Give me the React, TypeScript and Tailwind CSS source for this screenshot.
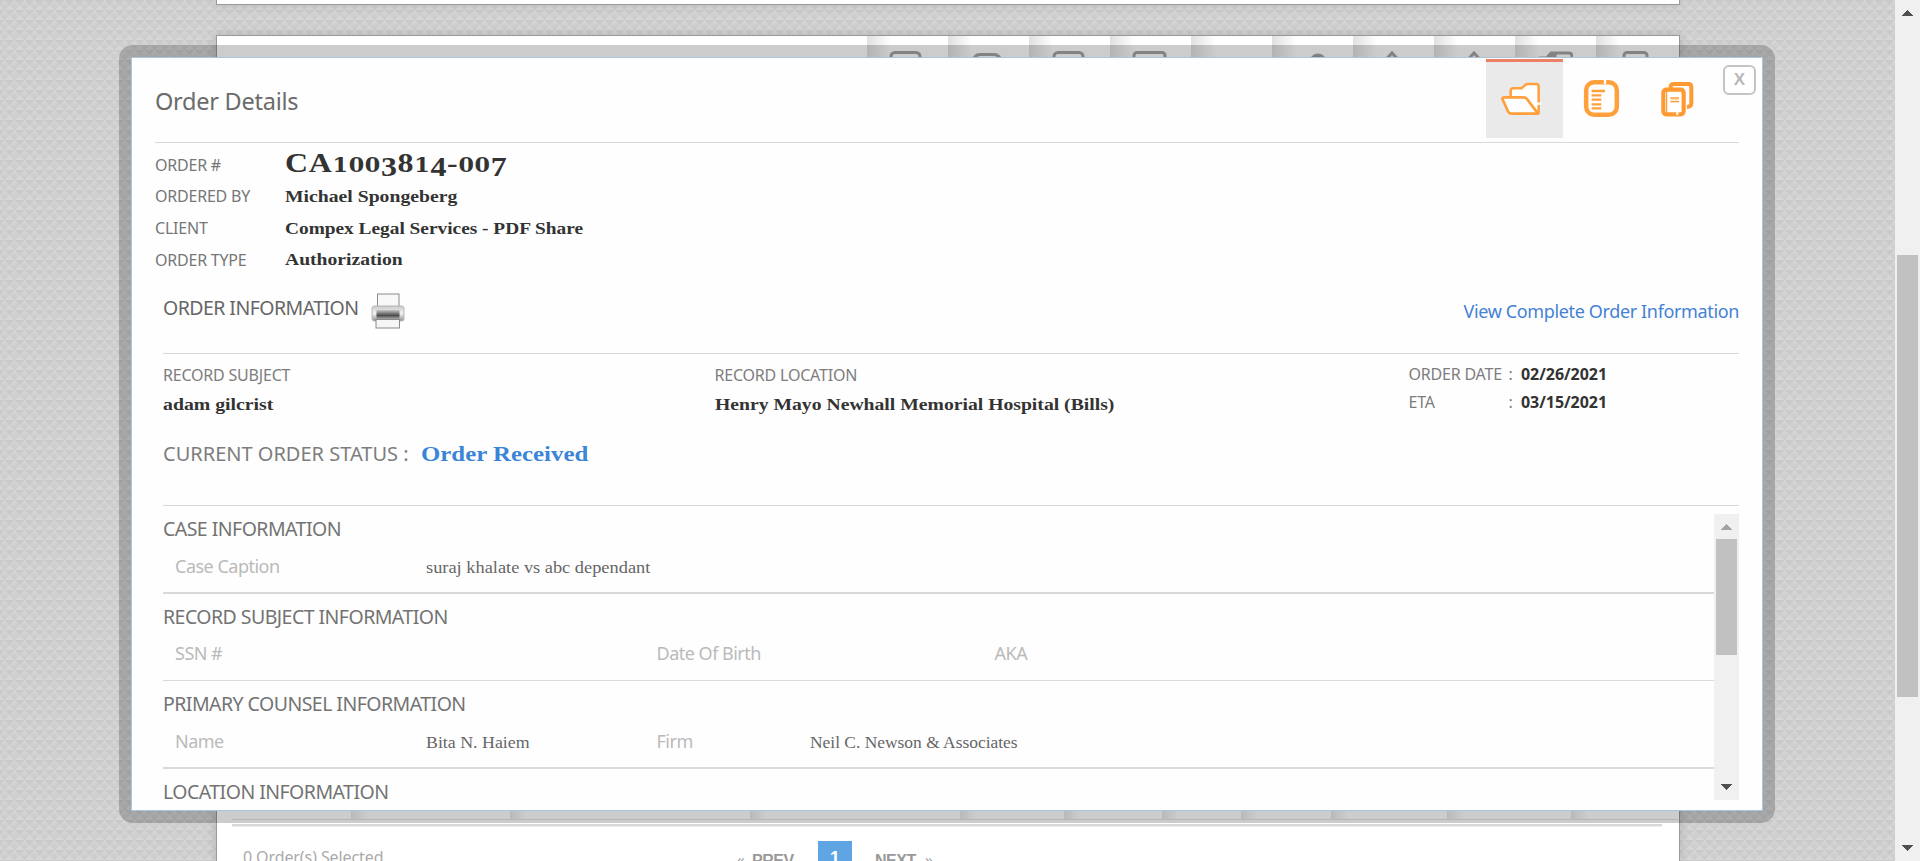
import React from 'react';

const SANS = "font-['Noto_Sans','Open_Sans',sans-serif]";
const SERIF = "font-['Georgia','Liberation_Serif',serif]";
const serifBold = `${SERIF} inline-block origin-left whitespace-nowrap text-[17.5px] font-bold text-[#333]`;

function Arrow({ up, className }: { up?: boolean; className: string }) {
  return (
    <svg viewBox="0 0 11 6" shapeRendering="crispEdges" className={`h-[6px] w-[11px] ${className}`}>
      <path d={up ? 'M0 6L5.5 0L11 6Z' : 'M0 0L5.5 6L11 0Z'} fill="currentColor" />
    </svg>
  );
}

function FolderIcon() {
  return (
    <svg viewBox="300 236 125 120" className="h-[40px] w-[41.67px]" fill="#fff" stroke="#ffa03c" strokeLinejoin="round">
      <path d="M332 290V272Q332 264 340 264H364L378 252Q380 251 383 251H409Q416 251 416 258V338H340Z" strokeWidth="7.5" />
      <path d="M314 291H368Q376 291 380 295L414 340H336Q328 340 325 335L308 298Q305 291 314 291Z" strokeWidth="8" />
      <path d="M408 310H424" stroke="#fff" strokeWidth="7" />
    </svg>
  );
}

function ListIcon() {
  return (
    <svg viewBox="545 234 118 124" className="h-[41.33px] w-[39.33px]" fill="none" stroke="#ffa03c">
      <rect x="557.5" y="246.5" width="92" height="98" rx="24" strokeWidth="13.5" />
      <path d="M614 238V252" stroke="#fff" strokeWidth="7" />
      <path d="M574 273H614M574 286H603M574 299H603M574 313H603M574 325H603" strokeWidth="7" />
    </svg>
  );
}

function CopyIcon() {
  return (
    <svg viewBox="778 238 110 116" className="h-[38.67px] w-[36.67px]" fill="none" stroke="#ff9a33">
      <path d="M813 264V258Q813 250 823 250H866Q875 250 875 259V308Q875 318 862 319" strokeWidth="12" />
      <rect x="791" y="267" width="61" height="74" rx="9" strokeWidth="12.5" fill="#fff" />
      <path d="M801 270V338" strokeWidth="3.5" />
      <path d="M812 292H838M812 303H838" strokeWidth="4" />
      <path d="M812 297.500H838" stroke="#ffd9ad" strokeWidth="4" />
      <path d="M833 332V343" stroke="#fff" strokeWidth="6" />
    </svg>
  );
}

function PrinterIcon() {
  return (
    <svg viewBox="0 0 34 36" className="h-[36px] w-[34px]">
      <defs>
        <linearGradient id="body" x1="0" y1="0" x2="0" y2="1">
          <stop offset="0" stopColor="#c4c4c4" />
          <stop offset="0.3" stopColor="#8a8a8a" />
          <stop offset="0.6" stopColor="#4c4c4c" />
          <stop offset="1" stopColor="#a8a8a8" />
        </linearGradient>
        <linearGradient id="shell" x1="0" y1="0" x2="0" y2="1">
          <stop offset="0" stopColor="#c9c9c9" />
          <stop offset="0.5" stopColor="#f2f2f2" />
          <stop offset="1" stopColor="#8f8f8f" />
        </linearGradient>
      </defs>
      <rect x="6.500" y="1" width="21.500" height="16" fill="#f8f8f8" stroke="#8a8a8a" />
      <rect x="1" y="13" width="32" height="15" rx="2.500" fill="url(#shell)" stroke="#b5b5b5" />
      <rect x="5.500" y="17" width="23" height="9" fill="url(#body)" />
      <rect x="5" y="26.500" width="23.500" height="8.500" fill="#f6f6f6" stroke="#8a8a8a" />
    </svg>
  );
}

const toolIcons: (React.ReactNode | null)[] = [
  <rect x="4" y="2.500" width="29" height="28" rx="4" />,
  <rect x="5" y="4.500" width="28" height="28" rx="7" />,
  <rect x="5" y="2.500" width="29" height="28" rx="4" />,
  <rect x="4" y="2.500" width="31" height="28" rx="3" />,
  null,
  <circle cx="26" cy="12" r="7" fill="#8a8a8a" />,
  <path d="M9 14L19 3L29 14" />,
  <path d="M10 14L20 3L30 14" />,
  <path d="M4 8H12L16 3H34Q37 3 37 6V20M12 6H20V12" />,
  <rect x="7" y="2.500" width="23" height="28" rx="3" />,
];

function Toolbar() {
  return (
    <div className="flex h-[76px] justify-end">
      {toolIcons.map((icon, i) => (
        <div
          key={i}
          className={`flex justify-center bg-gradient-to-r from-[#e0e0e0] to-white to-[24px] pr-[4px] ${i === 9 ? 'w-[83px]' : 'w-[81px]'}`}
        >
          <svg viewBox="0 0 38 26" className="mt-[14px] h-[26px] w-[38px]" fill="none" stroke="#a3a3a3" strokeWidth="3">
            {icon}
          </svg>
        </div>
      ))}
    </div>
  );
}

const columnWidths = [
  'w-[159px]', 'w-[240px]', 'w-[210px]', 'w-[105px]', 'w-[98px]',
  'w-[79px]', 'w-[90px]', 'w-[116px]', 'w-[124px]', 'w-[107px]',
];

function Background() {
  return (
    <div className="flex h-[861px] flex-col items-start pl-[216px]">
      <div className="h-[5px] w-[1464px] shrink-0 border border-t-0 border-[#999] bg-white shadow-[0_0_10px_rgba(0,0,0,0.15)]" />
      <div className="mt-[30px] flex w-[1464px] flex-1 flex-col border border-b-0 border-[#999] bg-white shadow-[0_0_10px_rgba(0,0,0,0.15)]">
        <Toolbar />
        <div className="flex-1" />
        <div className="mr-px ml-[15px] flex h-[21px] border-b border-[#e4e4e4]">
          <div className="w-[119px]" />
          {columnWidths.map((c, i) => (
            <div key={i} className={`bg-gradient-to-r from-[#e8e8e8] to-white to-[16px] ${c}`} />
          ))}
        </div>
        <div className="mt-[4px] mr-[17px] ml-[15px] h-[3px] border-b border-[#eee] bg-[#d8d8d8]" />
        <div className="flex h-[34px] items-start overflow-hidden">
          <div className={`${SANS} w-[520px] pt-[19px] pl-[26px] text-[16px] leading-[22px] tracking-[-0.1px] text-[#aaa]`}>
            0 Order(s) Selected
          </div>
          <div className="flex items-start font-['Liberation_Sans',sans-serif] text-[16px] leading-[20px] font-bold text-[#999]">
            <span className="w-[15px] pt-[23px] text-[14px] font-normal">«</span>
            <span className="w-[66px] pt-[24px] tracking-[-0.5px]">PREV</span>
            <span className="mt-[14px] h-[34px] w-[34px] bg-[#5fa5e3] pt-[7px] text-center text-[18px] text-white">1</span>
            <span className="ml-[23px] w-[50px] pt-[24px] tracking-[-0.5px]">NEXT</span>
            <span className="pt-[23px] text-[14px] font-normal">»</span>
          </div>
        </div>
      </div>
    </div>
  );
}

function OrderNumber() {
  const low = "font-['DejaVu_Serif',serif] text-[19.5px]";
  return (
    <span className={`${SERIF} inline-block origin-left scale-x-[1.14] text-[28px] leading-[32px] font-bold tracking-[0.6px] whitespace-nowrap text-[#333]`}>
      CA<span className={low}>100</span>
      <span className="align-[-4px]">3</span>8<span className={low}>1</span>
      <span className="align-[-4px]">4</span>-<span className={low}>00</span>
      <span className="align-[-4px]">7</span>
    </span>
  );
}

function HeaderRow({ label, children }: { label: string; children: React.ReactNode }) {
  return (
    <div className="flex h-[31.6px] items-center">
      <span className={`${SANS} w-[129.5px] text-[16px] leading-[24px] tracking-[-0.22px] text-[#777]`}>{label}</span>
      {children}
    </div>
  );
}

function Label({ children }: { children: React.ReactNode }) {
  return <div className={`${SANS} text-[16px] leading-[28px] tracking-[-0.2px] text-[#7d7d7d]`}>{children}</div>;
}

function Section({ title, last, thick, children }: { title: string; last?: boolean; thick?: boolean; children?: React.ReactNode }) {
  return (
    <div className={`h-[87.5px] shrink-0 ${last ? '' : thick ? 'border-b-2 border-[#d9d9d9]' : 'border-b border-[#d9d9d9]'}`}>
      <div className={`${SANS} pt-[8px] text-[19.5px] leading-[30px] tracking-[-0.54px] text-[#737373]`}>{title}</div>
      <div className={`${SANS} mt-[7.5px] flex items-center pl-[12px] text-[18px] leading-[28px] tracking-[-0.5px] text-[#bababa]`}>{children}</div>
    </div>
  );
}

const serifValue = `${SERIF} inline-block origin-left whitespace-nowrap pt-[3px] leading-[25px] text-[17px] tracking-normal text-[#666]`;

function Modal() {
  return (
    <div className="absolute top-[45px] left-[119px] h-[778px] w-[1656px] rounded-[14px] bg-black/20 p-[12px]">
      <div className="flex h-[754px] flex-col border border-[#a9c6dc] bg-[#fefefe]">
        <div className="ml-[23px] flex h-[85px] w-[1584px] shrink-0 border-b border-[#d9d9d9]">
          <div className={`${SANS} flex-1 pt-[27px] text-[23.5px] leading-[32px] tracking-[-0.25px] text-[#6b6b6b]`}>Order Details</div>
          <div className="mt-px flex h-[79px] w-[77px] border-t-[3px] border-[#ef8068] bg-[#eaeaea] pt-[16.500px] pl-[14px]"><FolderIcon /></div>
          <div className="flex w-[77px] justify-center pt-[20px] pl-[1px]"><ListIcon /></div>
          <div className="flex w-[99px] pt-[21.500px] pl-[19px]"><CopyIcon /></div>
        </div>
        <button className="absolute top-[20px] left-[1604px] h-[30px] w-[33px] rounded-[6px] border-2 border-[#c4c4c4] bg-white font-['Liberation_Sans',sans-serif] text-[17px] leading-[26px] font-bold text-[#b8b8b8]">
          X
        </button>
        <div className="ml-[23px] pt-[6px]">
          <HeaderRow label="ORDER #"><OrderNumber /></HeaderRow>
          <HeaderRow label="ORDERED BY"><span className={`${serifBold} scale-x-[1.125]`}>Michael Spongeberg</span></HeaderRow>
          <HeaderRow label="CLIENT"><span className={`${serifBold} scale-x-[1.105]`}>Compex Legal Services - PDF Share</span></HeaderRow>
          <HeaderRow label="ORDER TYPE"><span className={`${serifBold} scale-x-[1.12]`}>Authorization</span></HeaderRow>
        </div>
        <div className="ml-[31px] flex h-[79px] w-[1576px] shrink-0 items-start border-b border-[#d9d9d9] pt-[17.500px]">
          <span className={`${SANS} w-[207.5px] text-[19.5px] leading-[30px] tracking-[-0.55px] text-[#666]`}>ORDER INFORMATION</span>
          <PrinterIcon />
          <span className={`${SANS} ml-auto pt-[3.5px] text-[18px] leading-[30px] tracking-[-0.36px] text-[#4482d4]`}>View Complete Order Information</span>
        </div>
        <div className="ml-[31px] flex w-[1576px] shrink-0 pt-[7px]">
          <div className="w-[551.500px]">
            <Label>RECORD SUBJECT</Label>
            <span className={`${serifBold} scale-x-[1.13] leading-[30px]`}>adam gilcrist</span>
          </div>
          <div className="w-[694px]">
            <Label>RECORD LOCATION</Label>
            <span className={`${serifBold} scale-x-[1.124] leading-[30px]`}>Henry Mayo Newhall Memorial Hospital (Bills)</span>
          </div>
          <div className="h-[59px]">
            {[['ORDER DATE', '02/26/2021'], ['ETA', '03/15/2021']].map(([k, v]) => (
              <div key={k} className={`${SANS} flex text-[16px] leading-[27.5px] text-[#7d7d7d]`}>
                <span className="w-[100px] tracking-[-0.2px]">{k}</span>
                <span className="w-[12.5px]">:</span>
                <span className="font-bold tracking-[-0.05px] text-[#333]">{v}</span>
              </div>
            ))}
          </div>
        </div>
        <div className="ml-[31px] flex h-[86px] w-[1576px] shrink-0 items-start border-b border-[#d9d9d9] pt-[18px]">
          <span className={`${SANS} w-[257.500px] text-[20px] leading-[32px] tracking-[0px] text-[#7d7d7d]`}>CURRENT ORDER STATUS :</span>
          <span className={`${SERIF} inline-block origin-left scale-x-[1.13] text-[22px] leading-[32px] font-bold text-[#3b85d8]`}>Order Received</span>
        </div>
        <div className="ml-[31px] flex h-[302px] w-[1576px] shrink-0">
          <div className="flex w-[1551px] flex-col overflow-hidden">
            <Section title="CASE INFORMATION" thick>
              <span className="w-[250.5px]">Case Caption</span>
              <span className={`${serifValue} scale-x-[1.08]`}>suraj khalate vs abc dependant</span>
            </Section>
            <Section title="RECORD SUBJECT INFORMATION">
              <span className="w-[481.500px]">SSN #</span>
              <span className="w-[338px]">Date Of Birth</span>
              <span>AKA</span>
            </Section>
            <Section title="PRIMARY COUNSEL INFORMATION" thick>
              <span className="w-[250.5px]">Name</span>
              <span className={`${serifValue} w-[231px] scale-x-[1.05]`}>Bita N. Haiem</span>
              <span className="w-[153px]">Firm</span>
              <span className={`${serifValue} scale-x-[1.025]`}>Neil C. Newson &amp; Associates</span>
            </Section>
            <Section title="LOCATION INFORMATION" last />
          </div>
          <div className="mt-[8px] flex h-[286px] w-[25px] flex-col items-center bg-[#f0f0f0]">
            <Arrow up className="mt-[10px] shrink-0 text-[#a3a3a3]" />
            <div className="mt-[9px] h-[116px] w-[21px] bg-[#c1c1c1]" />
            <Arrow className="mt-auto mb-[10px] shrink-0 text-[#505050]" />
          </div>
        </div>
      </div>
    </div>
  );
}

export default function App() {
  return (
    <div className="flex h-[861px] w-[1920px] overflow-hidden">
      <div className="relative w-[1895px] overflow-hidden bg-[linear-gradient(135deg,#cacaca_25%,transparent_25%),linear-gradient(225deg,#cacaca_25%,transparent_25%),linear-gradient(45deg,#d6d6d6_25%,transparent_25%),linear-gradient(315deg,#d6d6d6_25%,transparent_25%),linear-gradient(#d8d8d8,#c8c8c8)] bg-[length:10px_10px]">
        <Background />
        <Modal />
      </div>
      <div className="flex w-[25px] flex-col items-center bg-[#f0f0f0]">
        <Arrow up className="mt-[10px] shrink-0 text-[#505050]" />
        <div className="mt-[239px] h-[442px] w-[21px] bg-[#c1c1c1]" />
        <Arrow className="mt-auto mb-[10px] shrink-0 text-[#505050]" />
      </div>
    </div>
  );
}
